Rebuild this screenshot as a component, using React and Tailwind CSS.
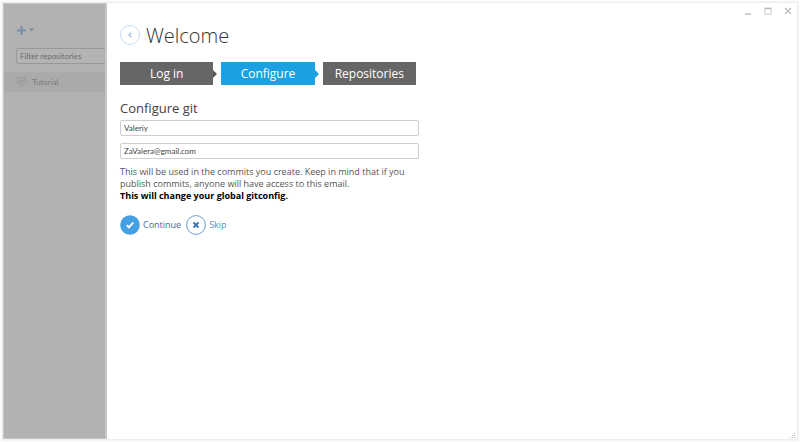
import React from "react";

function Step({ label, active, last }) {
  return (
    <li
      aria-current={active ? "step" : undefined}
      className={
        "relative flex h-[23px] flex-1 items-center justify-center text-[12px] leading-4 text-white " +
        (active ? "bg-[#1ba1e2]" : "bg-[#666666]")
      }
    >
      {label}
      {!last && (
        <svg viewBox="0 0 4 8" className="absolute top-2 left-full h-2 w-1" aria-hidden="true">
          <path d="M0 0L4 4L0 8Z" fill={active ? "#1ba1e2" : "#555555"} />
        </svg>
      )}
    </li>
  );
}

function TextField({ label, type, value }) {
  return (
    <input
      aria-label={label}
      type={type}
      defaultValue={value}
      className="h-4 w-full rounded-xs border border-[#cfcfcf] bg-white px-[3px] font-['Lato','Noto_Sans',sans-serif] text-[8px] leading-3 text-[#444] outline-none"
    />
  );
}

function Sidebar() {
  return (
    <aside className="w-[104px] shrink-0 overflow-hidden border border-r-2 border-[#c6c6c6] bg-[#b2b2b2] font-['Lato','Noto_Sans',sans-serif] text-[8px] text-[#7c7c7c]">
      <button aria-label="Add repository" className="mt-5 ml-[13px] flex h-3 items-center gap-[3px]">
        <svg viewBox="0 0 9 9" className="size-[9px]" aria-hidden="true">
          <path d="M4.5 0V9M0 4.5H9" stroke="#7690a8" strokeWidth="2" />
        </svg>
        <svg viewBox="0 0 5 4" className="h-1 w-[5px]" aria-hidden="true">
          <path d="M0 0.3H5L2.5 3.6Z" fill="#7690a8" />
        </svg>
      </button>
      <input
        aria-label="Filter repositories"
        placeholder="Filter repositories"
        className="mt-3 ml-3 block h-4 w-28 rounded-xs border border-[#989898] bg-[#b4b4b4] px-[3px] text-[8px] leading-3 outline-none placeholder:text-[#6c6c6c]"
      />
      <a href="#tutorial" className="mt-2 flex h-5 items-center gap-[5px] bg-[#aaaaaa] pl-3">
        <svg viewBox="0 0 11 10" className="h-[10px] w-[11px]" fill="none" stroke="#9b9b9b" aria-hidden="true">
          <path d="M1 2.5V0.7H10V6.5H1V5M3 9H8M5.5 6.5V9" />
          <path d="M1 5.5L4.5 3.5L6 4.5L9.5 1.5" strokeWidth="1.5" />
        </svg>
        Tutorial
      </a>
    </aside>
  );
}

function WindowControls() {
  return (
    <div className="absolute top-[2px] right-[3px] flex gap-2 text-[#b8b8b8]">
      <button aria-label="Minimize" className="flex size-3 items-center justify-center">
        <svg viewBox="0 0 8 8" className="size-2" aria-hidden="true">
          <path d="M1 7H7" stroke="currentColor" strokeWidth="1.3" />
        </svg>
      </button>
      <button aria-label="Maximize" className="flex size-3 items-center justify-center">
        <svg viewBox="0 0 8 8" className="size-2" fill="none" stroke="currentColor" aria-hidden="true">
          <path d="M1 1.5H7V7.3H1Z" strokeWidth="0.8" />
          <path d="M0.6 1.4H7.4" strokeWidth="1.6" />
        </svg>
      </button>
      <button aria-label="Close" className="flex size-3 items-center justify-center">
        <svg viewBox="0 0 8 8" className="size-2" aria-hidden="true">
          <path d="M1 1L7 7M7 1L1 7" stroke="currentColor" strokeWidth="1.2" />
        </svg>
      </button>
    </div>
  );
}

export default function App() {
  return (
    <div className="flex min-h-screen bg-white p-[2px] font-['Open_Sans','Noto_Sans',sans-serif]">
      <div className="relative flex flex-1 border border-[#eeeeee] bg-white shadow-[0_0_2px_#e0e0e0]">
        <Sidebar />
        <main className="min-w-0 flex-1 px-[13px] pt-[17px]">
          <header className="flex items-center gap-[6px]">
            <button aria-label="Back" className="flex size-5 items-center justify-center rounded-full border border-[#c9def2]">
              <svg viewBox="0 0 6 6" className="size-[6px]" fill="none" aria-hidden="true">
                <path d="M4.3 0.8L2 3L4.3 5.2" stroke="#a9c6e4" strokeWidth="1.5" />
              </svg>
            </button>
            <h1 className="pt-[2px] text-[20px] leading-7 font-light text-[#333]">Welcome</h1>
          </header>

          <div className="max-w-[299px]">
            <ol className="mt-3 mr-[3px] flex gap-2">
              <Step label="Log in" />
              <Step label="Configure" active />
              <Step label="Repositories" last />
            </ol>

            <h2 className="mt-[14px] text-[13px] leading-[18px] text-[#444]">Configure git</h2>
            <form className="mt-[3px]">
              <div className="flex flex-col gap-[7px]">
                <TextField label="Name" type="text" value="Valeriy" />
                <TextField label="Email" type="email" value="ZaValera@gmail.com" />
              </div>
              <p className="mt-[7px] text-[9px] leading-3 text-[#555]">
                This will be used in the commits you create. Keep in mind that if you
                publish commits, anyone will have access to this email.
                <strong className="block font-bold text-black">This will change your global gitconfig.</strong>
              </p>
              <div className="mt-[13px] flex gap-[5px] text-[9px] leading-5">
                <button type="button" className="flex items-center gap-[3px] text-[#41699c]">
                  <svg viewBox="0 0 20 20" className="size-5" aria-hidden="true">
                    <circle cx="10" cy="10" r="9.8" fill="#459fe3" />
                    <path d="M6.8 10.2L9 12.3L13.2 7.6" fill="none" stroke="white" strokeWidth="2" />
                  </svg>
                  Continue
                </button>
                <button type="button" className="flex items-center gap-[3px] text-[#5f8dc6]">
                  <svg viewBox="0 0 20 20" className="size-5" fill="none" aria-hidden="true">
                    <circle cx="10" cy="10" r="9.4" stroke="#6f9bd0" />
                    <path d="M7.5 7.5L12.5 12.5M12.5 7.5L7.5 12.5" stroke="#3676b8" strokeWidth="2" />
                  </svg>
                  Skip
                </button>
              </div>
            </form>
          </div>
        </main>

        <WindowControls />
        <svg viewBox="0 0 6 6" className="absolute right-px bottom-0 size-[6px]" fill="#bcbcbc" aria-hidden="true">
          <path d="M4 0H5V1H4ZM2 2H3V3H2ZM4 2H5V3H4ZM0 4H1V5H0ZM2 4H3V5H2ZM4 4H5V5H4Z" />
        </svg>
      </div>
    </div>
  );
}
